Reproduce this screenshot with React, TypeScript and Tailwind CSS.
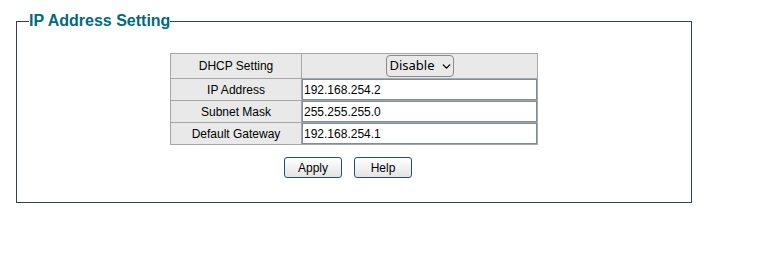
import { ChevronDown } from "lucide-react";

const rows = [
  { label: "IP Address", value: "192.168.254.2" },
  { label: "Subnet Mask", value: "255.255.255.0" },
  { label: "Default Gateway", value: "192.168.254.1" },
];

export default function App() {
  return (
    <div className="w-[784px] h-[258px] bg-white font-['Liberation_Sans',Arial,sans-serif] pt-3">
      <fieldset className="ml-4 w-[676px] border border-[#33434a] px-3 pb-[24px]">
        {/* Заголовок */}
        <legend className="text-[16px] leading-[18px] font-bold text-[#006a80]">
          IP Address Setting
        </legend>

        <div className="pt-[23px] flex flex-col items-center">
          <table className="w-[368px] border-collapse text-[12px] text-black">
            <tbody>
              <tr className="h-[25px]">
                <td className="w-[131px] border border-[#a6a6a6] bg-[#e9e9e9] text-center">
                  DHCP Setting
                </td>
                <td className="border border-[#a6a6a6] bg-[#e9e9e9] text-center">
                  <div className="inline-flex items-center gap-[5px] h-[22px] w-[68px] pl-[3px] rounded-[4px] border border-[#8a8a8a] font-['Noto_Sans',sans-serif] text-[13px] align-middle">
                    Disable
                    <ChevronDown size={13} strokeWidth={2.5} />
                  </div>
                </td>
              </tr>
              {rows.map((r) => (
                <tr key={r.label} className="h-[22px]">
                  <td className="border border-[#a6a6a6] bg-[#e9e9e9] text-center">{r.label}</td>
                  <td className="border border-[#a6a6a6] bg-[#e9e9e9] p-0">
                    <input
                      readOnly
                      value={r.value}
                      className="block w-full h-[21px] px-px bg-white border border-[#7f8c99] text-[12px] text-black outline-none font-['Liberation_Sans',Arial,sans-serif]"
                    />
                  </td>
                </tr>
              ))}
            </tbody>
          </table>

          {/* Кнопки */}
          <div className="flex gap-3 mt-3 pr-3">
            {["Apply", "Help"].map((b) => (
              <button
                key={b}
                className="w-[58px] h-[21px] rounded-[3px] border border-[#1f4e7c] bg-gradient-to-b from-white to-[#e4e4e4] text-[12px] text-black"
              >
                {b}
              </button>
            ))}
          </div>
        </div>
      </fieldset>
    </div>
  );
}
